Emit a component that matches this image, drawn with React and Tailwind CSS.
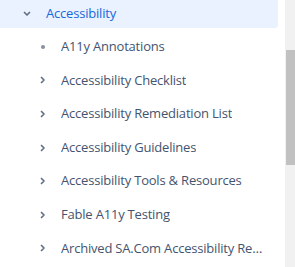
import React from 'react';

const items = [
  { label: 'A11y Annotations', leaf: true },
  { label: 'Accessibility Checklist' },
  { label: 'Accessibility Remediation List' },
  { label: 'Accessibility Guidelines' },
  { label: 'Accessibility Tools & Resources' },
  { label: 'Fable A11y Testing' },
  { label: 'Archived SA.Com Accessibility Resources' },
];

const Chevron = ({ down }) => (
  <svg width="12" height="12" viewBox="0 0 12 12" className={down ? 'rotate-90' : ''}>
    <path d="M4.5 3.5 L7 6 L4.5 8.5" fill="none" stroke="currentColor" strokeWidth="1.7" strokeLinecap="round" strokeLinejoin="round" />
  </svg>
);

export default function App() {
  return (
    <div className="flex w-[295px] h-[267px] overflow-hidden bg-white" style={{ fontFamily: '"Open Sans", sans-serif' }}>
      <div className="flex-1 flex flex-col pr-[7px]">
        <div className="flex items-center h-[28px] bg-[#e9f2fe] rounded-br-[3px] text-[#1868db]">
          <span className="w-[22px] ml-[21px] flex text-[#626f86]"><Chevron down /></span>
          <span className="text-[13px] tracking-[-0.2px] ml-[3px]">Accessibility</span>
        </div>
        <div className="flex flex-col mt-[2px]">
          {items.map((it, i) => (
            <div key={i} className="flex items-center h-[33.6px] pl-[36px] text-[#44546f]">
              <span className="w-[25px] flex justify-start pl-[1px] text-[#626f86]">
                {it.leaf ? <span className="w-[4px] h-[4px] rounded-full bg-[#8590a2] ml-[4px]" /> : <Chevron />}
              </span>
              <span className="text-[13px] tracking-[-0.2px] truncate max-w-[203px]">{it.label}</span>
            </div>
          ))}
        </div>
      </div>
      <div className="w-[10px] bg-[#f1f1f1] flex flex-col pl-[1px]">
        <div className="mt-[50px] h-[115px] bg-[#c1c1c1]" />
      </div>
    </div>
  );
}
